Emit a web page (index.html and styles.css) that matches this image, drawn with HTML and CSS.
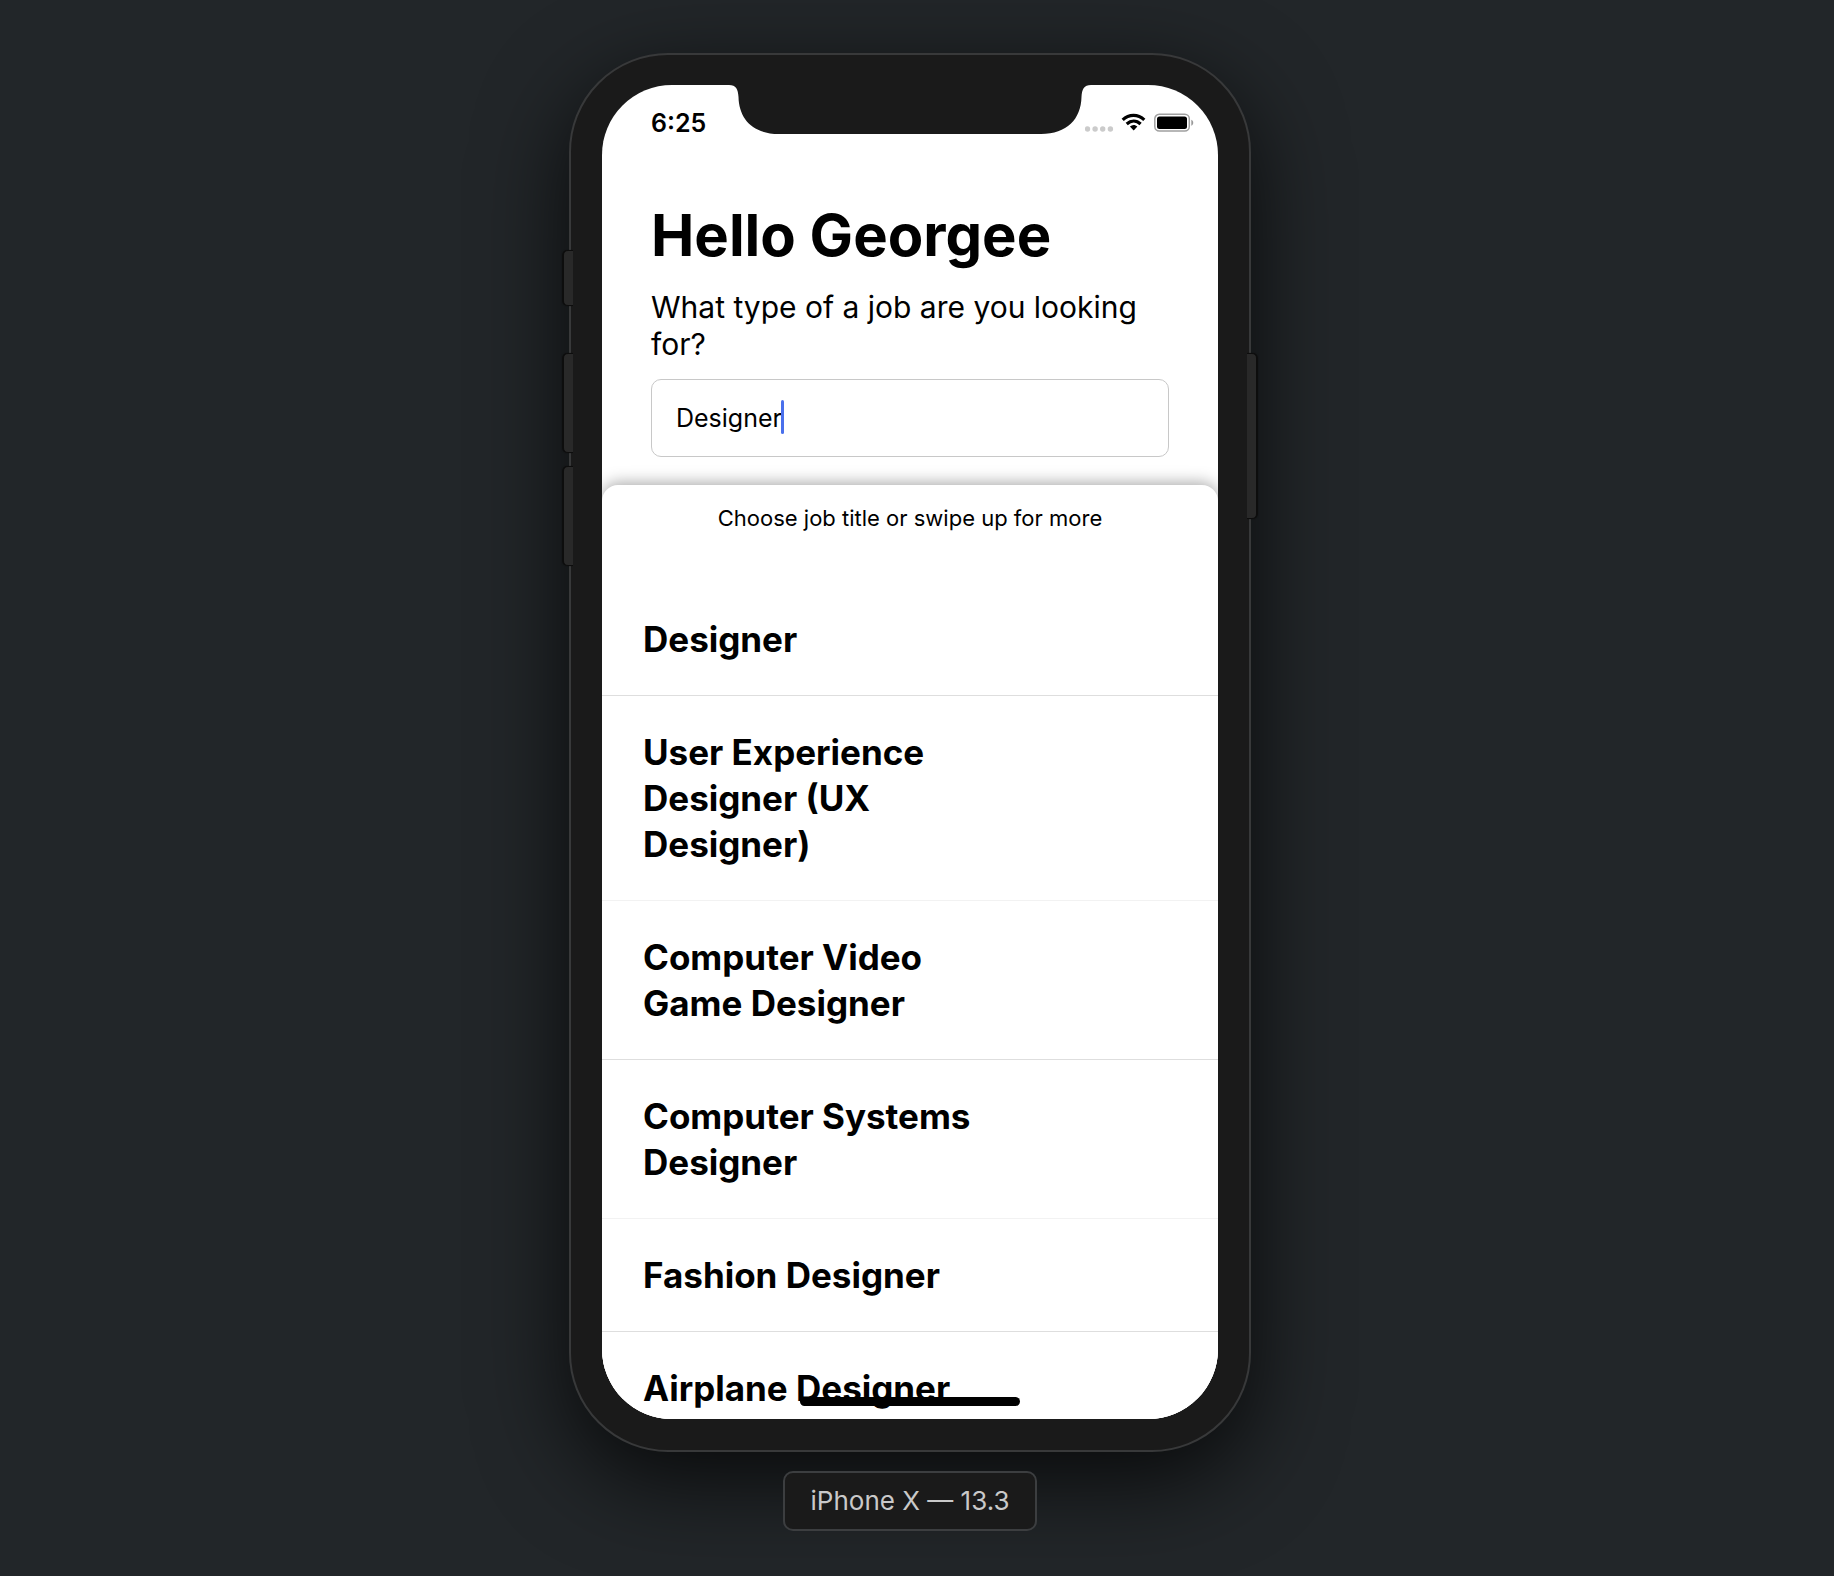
FILE: index.html
```html
<!DOCTYPE html>
<html lang="en">
<head>
<meta charset="utf-8">
<meta name="viewport" content="width=device-width, initial-scale=1">
<title>Job search</title>
<link rel="stylesheet" href="styles.css">
</head>
<body>
<main class="stage">
  <div class="phone">
    <span class="side-key key-mute"></span>
    <span class="side-key key-up"></span>
    <span class="side-key key-down"></span>
    <span class="side-key key-power"></span>
    <div class="screen">
      <svg class="notch" viewBox="0 0 362 49" aria-hidden="true"><path d="M0 0C7 0 9 4 9.500 12C10 34 24 49 50 49H312C338 49 352 34 352.500 12C353 4 355 0 362 0Z" fill="#1a1a1a"/></svg>
      <header class="status">
        <time class="clock">6:25</time>
        <svg class="status-icons" width="110" height="20" viewBox="0 0 110 20" aria-hidden="true">
          <g fill="#cbcbcb"><circle cx="2.500" cy="16" r="2.700"/><circle cx="10.100" cy="16" r="2.700"/><circle cx="17.700" cy="16" r="2.700"/><circle cx="25.400" cy="16" r="2.700"/></g>
          <g fill="none" stroke="#000" stroke-width="3.200"><path d="M37.700 6.800C44 .9 53 .9 59.300 6.800"/><path d="M41.700 11C46 7.100 51.500 7.100 55.600 11"/></g>
          <path d="M44.900 13.600C47.300 11.500 50 11.500 52.400 13.600L48.700 17.600Z"/>
          <rect x="69.800" y="1.300" width="34.500" height="16.800" rx="4.500" fill="none" stroke="#a0a0a0" stroke-width="1.500"/>
          <rect x="72" y="3.500" width="30" height="12.400" rx="2.500"/>
          <path d="M106.300 6.700C108.900 7.700 108.900 11.700 106.300 12.700Z" fill="#999"/>
        </svg>
      </header>
      <section class="search">
        <h1 class="greeting">Hello Georgee</h1>
        <label class="question" for="job">What type of a job are you looking for?</label>
        <div class="field">
          <input class="job-input" id="job" type="text" value="Designer">
          <span class="caret"></span>
        </div>
      </section>
      <section class="sheet">
        <p class="hint">Choose job title or swipe up for more</p>
        <ul class="jobs">
          <li><button class="job" type="button"><span class="job-title">Designer</span></button></li>
          <li><button class="job" type="button"><span class="job-title">User Experience Designer (UX Designer)</span></button></li>
          <li><button class="job" type="button"><span class="job-title">Computer Video Game Designer</span></button></li>
          <li><button class="job" type="button"><span class="job-title">Computer Systems Designer</span></button></li>
          <li><button class="job" type="button"><span class="job-title">Fashion Designer</span></button></li>
          <li><button class="job" type="button"><span class="job-title">Airplane Designer</span></button></li>
        </ul>
      </section>
      <span class="home-bar"></span>
    </div>
  </div>
  <p class="device-label">iPhone X — 13.3</p>
</main>
</body>
</html>
```
FILE: styles.css
```css
* { box-sizing: border-box; }

body {
  margin: 0;
  min-height: 100vh;
  background: #222629;
  color: #000;
  font-family: Inter, "Liberation Sans", sans-serif;
}

h1, p, ul { margin: 0; padding: 0; }

.stage {
  display: flex;
  flex-direction: column;
  align-items: center;
  gap: 19px;
  padding: 53px 14px 40px 0;
}

.phone {
  position: relative;
  width: 100%;
  max-width: 682px;
  aspect-ratio: 682 / 1399;
  padding: 30px 31px 31px;
  border: 2px solid #38393a;
  border-radius: 99px;
  background: #1a1a1a;
  box-shadow: 0 28px 90px rgba(0, 0, 0, .75);
}

.side-key {
  position: absolute;
  left: -8px;
  width: 10px;
  background: #292929;
  border: 1px solid #0d0d0d;
  border-right: 0;
  border-radius: 5px 0 0 5px;
  box-shadow: -1px 0 1px #0d0d0d;
}
.key-mute { top: 195px; height: 56px; }
.key-up { top: 298px; height: 100px; }
.key-down { top: 411px; height: 100px; }
.key-power {
  top: 298px;
  left: auto;
  right: -8px;
  height: 166px;
  border: 1px solid #0d0d0d;
  border-left: 0;
  border-radius: 0 5px 5px 0;
  box-shadow: 1px 0 1px #0d0d0d;
}

.screen {
  position: relative;
  display: flex;
  flex-direction: column;
  height: 100%;
  overflow: hidden;
  border-radius: 70px;
  background: #fff;
}

.notch {
  position: absolute;
  top: 0;
  left: 50%;
  width: 362px;
  height: 49px;
  transform: translateX(-50%);
}

.status {
  display: flex;
  justify-content: space-between;
  align-items: center;
  height: 76px;
  padding: 0 23px 0 49px;
}
.clock { font-size: 25px; font-weight: 600; line-height: 32px; }

.search { padding: 40px 49px 28px; }

.greeting { font-size: 58px; font-weight: 700; line-height: 68px; }

.question {
  display: block;
  margin-top: 20px;
  font-size: 30px;
  line-height: 37px;
}

.field { position: relative; margin-top: 16px; }

.job-input {
  display: block;
  width: 100%;
  height: 78px;
  padding: 0 24px;
  border: 1px solid #c8c8c8;
  border-radius: 10px;
  background: #fff;
  color: #000;
  font: 400 25px Inter, "Liberation Sans", sans-serif;
}

.caret {
  position: absolute;
  top: 21px;
  left: 130px;
  width: 3px;
  height: 34px;
  border-radius: 2px;
  background: #4a70ec;
}

.sheet {
  flex: 1;
  min-height: 0;
  border-radius: 16px 16px 0 0;
  background: #fff;
  box-shadow: 0 -2px 16px rgba(0, 0, 0, .35);
}

.hint {
  padding: 17px 0 49px;
  font-size: 22px;
  line-height: 32px;
  text-align: center;
}

.jobs { list-style: none; }

.job {
  display: block;
  width: 100%;
  padding: 33px 41px;
  border: 0;
  border-bottom: 1px solid #dedede;
  background: #fff;
  color: #000;
  font: 700 35px/46px Inter, "Liberation Sans", sans-serif;
  text-align: left;
}
.jobs li:nth-child(even) .job { border-bottom-color: #f2f2f2; }
.job-title { display: block; max-width: 348px; }

.home-bar {
  position: absolute;
  bottom: 13px;
  left: 50%;
  width: 220px;
  height: 9px;
  border-radius: 5px;
  background: #000;
  transform: translateX(-50%);
}

.device-label {
  position: relative;
  padding: 12px 26px;
  border: 2px solid #3c3e40;
  border-radius: 10px;
  background: #1a1a1a;
  color: #c9c9c9;
  font-size: 26px;
  line-height: 32px;
}
```
